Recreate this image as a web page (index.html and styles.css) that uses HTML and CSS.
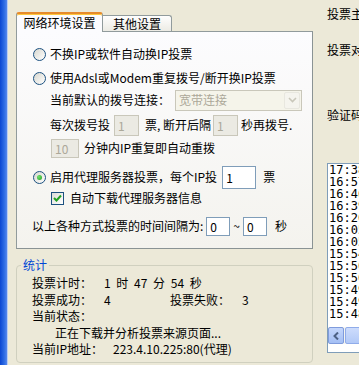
FILE: index.html
```html
<!DOCTYPE html>
<html lang="zh-CN">
<head>
    <meta charset="UTF-8">
    <title>投票设置</title>
    <link rel="stylesheet" href="styles.css">
</head>
<body>
<div class="window">
    <div class="edge"></div>

    <div class="main">
        <!-- 选项卡 -->
        <div class="tabs">
            <div class="tab active">网络环境设置</div>
            <div class="tab">其他设置</div>
        </div>

        <div class="panel">
            <div class="row r1"><span class="radio"></span>不换IP或软件自动换IP投票</div>
            <div class="row r2"><span class="radio"></span>使用Adsl或Modem重复拨号/断开换IP投票</div>
            <div class="row r3 sub">
                当前默认的拨号连接：
                <div class="combo">
                    <span class="combo-text">宽带连接</span>
                    <span class="combo-btn">
                        <svg width="9" height="6" viewBox="0 0 9 6"><polyline points="1,1 4.5,4.5 8,1" fill="none" stroke="#c9c7ba" stroke-width="1.6"/></svg>
                    </span>
                </div>
            </div>
            <div class="row r4 sub">
                每次拨号投<input class="box dis w25 ml4" type="text" value="1" disabled><span class="ml6">票, 断开后隔</span><input class="box dis w25 ml2" type="text" value="1" disabled><span class="ml3">秒再拨号.</span>
            </div>
            <div class="row r5 sub">
                <input class="box dis w28 ml1 h19" type="text" value="10" disabled><span class="ml5">分钟内IP重复即自动重拨</span>
            </div>
            <div class="row r6"><span class="radio on"></span>启用代理服务器投票，每个IP投<input class="box w34 ml5 h23" type="text" value="1"><span class="ml7">票</span></div>
            <div class="row r7 sub">
                <span class="check"><svg width="9" height="8" viewBox="0 0 9 8"><polyline points="1,4 3.5,6.5 8,1.5" fill="none" stroke="#21a121" stroke-width="2"/></svg></span>自动下载代理服务器信息
            </div>
            <div class="row r8">
                以上各种方式投票的时间间隔为:<input class="box w24 ml3 h19" type="text" value="0"><span class="ml3">~</span><input class="box w24 ml3 h19" type="text" value="0"><span class="ml8">秒</span>
            </div>
        </div>

        <!-- 统计 -->
        <fieldset class="group">
            <legend>统计</legend>
            <div class="stat"><span class="lbl">投票计时：</span><span class="val sp">1 时 47 分 54 秒</span></div>
            <div class="stat"><span class="lbl">投票成功：</span><span class="val w66">4</span><span class="lbl">投票失败：</span><span class="val">3</span></div>
            <div class="stat"><span class="lbl">当前状态：</span></div>
            <div class="stat indent">正在下载并分析投票来源页面...</div>
            <div class="stat"><span class="lbl">当前IP地址：</span><span class="val ml9">223.4.10.225:80(代理)</span></div>
        </fieldset>
    </div>

    <div class="side">
        <p class="s1">投票主题：</p>
        <p class="s2">投票对象：</p>
        <p class="s3">验证码：</p>
        <div class="list">
            <div class="items">
                <div>17:38:21</div>
                <div>16:57:40</div>
                <div>16:46:12</div>
                <div>16:39:55</div>
                <div>16:20:03</div>
                <div>16:05:47</div>
                <div>16:05:12</div>
                <div>15:54:36</div>
                <div>15:50:28</div>
                <div>15:50:09</div>
                <div>15:49:51</div>
                <div>15:49:30</div>
                <div>15:48:44</div>
            </div>
            <div class="hscroll">
                <div class="sbtn"><svg width="6" height="8" viewBox="0 0 6 8"><polyline points="5,0.5 1.5,4 5,7.5" fill="none" stroke="#4d6185" stroke-width="2"/></svg></div>
                <div class="thumb"></div>
            </div>
        </div>
    </div>
</div>
</body>
</html>
```

FILE: styles.css
```css
body {
    margin: 0;
    background: #ece9d8;
    font-family: "Noto Sans CJK SC", sans-serif;
    font-size: 12px;
    line-height: 14px;
    color: #000;
    overflow: hidden;
}
.window {
    display: flex;
    height: 365px;
    overflow: hidden;
}
.edge {
    flex: none;
    width: 7px;
    background: linear-gradient(to right, #0a46d2, #2d6be4 60%, #5587ec);
    border-right: 1px solid #b9cdf3;
}
.main {
    flex: none;
    width: 297px;
    margin-left: 8px;
    padding-top: 12px;
}

/* 选项卡 */
.tabs {
    display: flex;
    align-items: flex-end;
    height: 19px;
}
.tab {
    box-sizing: border-box;
    width: 69px;
    height: 16px;
    border: 1px solid #919b9c;
    border-left: none;
    border-bottom: none;
    border-radius: 0 3px 0 0;
    background: linear-gradient(#fefefe, #ecebe4);
    text-align: center;
    line-height: 15px;
}
.tab.active {
    width: 87px;
    height: 20px;
    border-left: 1px solid #919b9c;
    border-top: 2px solid #e68b2c;
    border-radius: 3px 3px 0 0;
    box-shadow: inset 0 1px 0 #ffc83c;
    background: #fcfcfe;
    line-height: 18px;
    margin-bottom: -1px;
    position: relative;
    z-index: 1;
}
.panel {
    box-sizing: border-box;
    height: 218px;
    border: 1px solid #919b9c;
    border-right-color: #8a9394;
    border-bottom-color: #8a9394;
    background: linear-gradient(#fcfcfe, #f4f3ee);
    padding: 11px 0 0 16px;
}
.row {
    display: flex;
    align-items: center;
    height: 22px;
    white-space: nowrap;
}
.sub { padding-left: 17px; }
.r2 { margin-top: 2px; }
.r4 { margin-top: 3px; }
.r5 { margin-top: 2px; height: 20px; padding-left: 17px; }
.r6 { margin-top: 7px; height: 24px; }
.r7 { margin-top: 1px; height: 16px; padding-left: 18px; }
.r8 { margin-top: 10px; height: 20px; margin-left: -1px; }

.radio {
    box-sizing: border-box;
    width: 13px;
    height: 13px;
    margin-right: 4px;
    border: 1px solid #1c5180;
    border-radius: 50%;
    background: linear-gradient(135deg, #d6d6ce, #fff);
    display: flex;
    align-items: center;
    justify-content: center;
}
.radio.on::after {
    content: "";
    width: 5px;
    height: 5px;
    border-radius: 50%;
    background: radial-gradient(circle at 35% 35%, #6fe06b, #21a121);
}
.check {
    box-sizing: border-box;
    width: 13px;
    height: 13px;
    margin-right: 6px;
    border: 1px solid #1c5180;
    background: linear-gradient(135deg, #dcdcd7, #fff);
    display: flex;
    align-items: center;
    justify-content: center;
}

.box {
    box-sizing: border-box;
    height: 21px;
    border: 1px solid #7f9db9;
    background: #fff;
    font: inherit;
    color: #000;
    padding: 0 0 0 3px;
    margin: 0;
}
.box.dis {
    background: #ebeae3;
    border-color: #c9c7ba;
    color: #aca899;
}
.combo {
    box-sizing: border-box;
    display: flex;
    align-items: center;
    width: 127px;
    height: 21px;
    margin-left: 5px;
    border: 1px solid #c9c7ba;
    background: #f5f4ea;
    color: #aca899;
}
.combo-text {
    flex: 1;
    padding-left: 3px;
}
.combo-btn {
    box-sizing: border-box;
    width: 16px;
    height: 17px;
    margin-right: 1px;
    border: 1px solid #e8e7df;
    border-radius: 2px;
    background: #f5f4ee;
    display: flex;
    align-items: center;
    justify-content: center;
}

.w24 { width: 24px; }
.w25 { width: 25px; }
.w28 { width: 28px; }
.w34 { width: 34px; }
.h19 { height: 19px; }
.h23 { height: 23px; }
.ml1 { margin-left: 1px; }
.ml2 { margin-left: 2px; }
.ml3 { margin-left: 3px; }
.ml4 { margin-left: 4px; }
.ml5 { margin-left: 5px; }
.ml6 { margin-left: 6px; }
.ml7 { margin-left: 7px; }
.ml8 { margin-left: 8px; }
.ml9 { margin-left: 9px; }

/* 统计 */
.group {
    box-sizing: border-box;
    width: 297px;
    min-width: 0;
    margin: 9px 0 0;
    padding: 3px 0 4px 4px;
    border: 1px solid #d0d0bf;
    border-radius: 4px;
}
.group legend {
    padding: 0 2px;
    color: #0046d5;
    line-height: 14px;
}
.stat {
    padding-left: 11px;
    line-height: 16.5px;
    white-space: nowrap;
}
.stat.indent { padding-left: 34px; }
.lbl {
    display: inline-block;
    width: 72px;
}
.val.w66 {
    display: inline-block;
    width: 66px;
}
.sp {
    white-space: pre;
    word-spacing: 3px;
}

/* 右侧 */
.side {
    flex: none;
    width: 80px;
    margin-left: 14px;
    padding-top: 7px;
    white-space: nowrap;
}
.side p {
    margin: 0;
    height: 14px;
}
.s2 { margin-top: 22px !important; }
.s3 { margin-top: 51px !important; }
.list {
    box-sizing: border-box;
    width: 80px;
    height: 190px;
    margin-top: 41px;
    border: 1px solid #7f9db9;
    background: #fff;
    display: flex;
    flex-direction: column;
    overflow: hidden;
}
.items {
    flex: none;
    height: 163px;
    overflow: hidden;
    padding-left: 1px;
    font-family: "DejaVu Sans Mono", monospace;
    font-size: 12px;
    line-height: 12px;
}
.hscroll {
    flex: none;
    display: flex;
    height: 17px;
    background: #f4f4f0;
}
.sbtn {
    box-sizing: border-box;
    flex: none;
    width: 16px;
    height: 17px;
    border: 1px solid #7f9bdc;
    border-radius: 2px;
    background: linear-gradient(#c4d6fc, #a4bff4);
    display: flex;
    align-items: center;
    justify-content: center;
}
.thumb {
    box-sizing: border-box;
    flex: 1;
    height: 17px;
    margin-left: 1px;
    border: 1px solid #90acea;
    border-radius: 2px;
    background: linear-gradient(#cddcfc, #b2c9f7);
}
```
